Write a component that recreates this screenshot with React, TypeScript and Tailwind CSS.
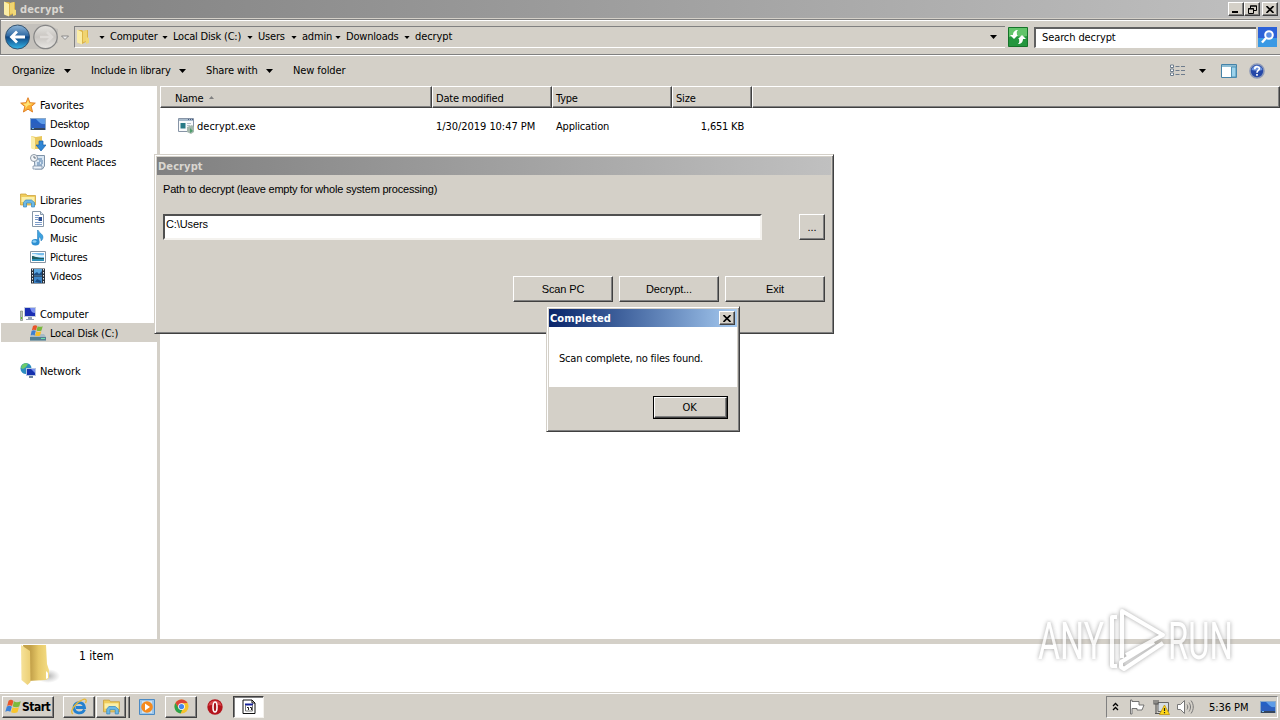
import { Fragment, type ReactNode } from "react";

type IconProps = { className?: string };

const FolderIcon = ({ className = "w-4 h-4" }: IconProps): React.ReactElement => (
  <svg viewBox="0 0 16 16" className={className}>
    <path d="M2 1h5l1 1 5-1v11l-6 3-4-1z" fill="#dcb548" />
    <path d="M8 2l4-1v11l-4 1z" fill="#f0d470" />
    <path d="M2 .5l5 2.500v12.500l-5-2z" fill="#fbeda6" />
    <path d="M11 8l3 1v5l-3 1z" fill="#f0d878" />
  </svg>
);

const BigFolderIcon = (): React.ReactElement => (
  <svg viewBox="0 0 40 42" className="w-10 h-[42px]">
    <defs>
      <linearGradient id="fold-front" x1="0" x2="1">
        <stop offset="0" stopColor="#f6e29a" />
        <stop offset="1" stopColor="#eccf74" />
      </linearGradient>
      <linearGradient id="fold-back" x1="0" x2="1">
        <stop offset="0.300" stopColor="#c4a24a" />
        <stop offset="0.600" stopColor="#e6c868" />
        <stop offset="1" stopColor="#f4dd85" />
      </linearGradient>
      <radialGradient id="fold-shade">
        <stop offset="0" stopColor="#808080" stopOpacity="0.6" />
        <stop offset="1" stopColor="#909090" stopOpacity="0" />
      </radialGradient>
    </defs>
    <ellipse cx="28" cy="32" rx="12" ry="7" fill="url(#fold-shade)" />
    <path d="M3 1h23l1 19 2 6v8l-3 2-18 1z" fill="url(#fold-back)" />
    <path d="M1 1l9 6 .5 31-3 3-6-5z" fill="url(#fold-front)" />
    <path d="M26 27l2 2v5l-2 1z" fill="#fff" />
  </svg>
);

const MonitorIcon = ({ className = "w-4 h-4" }: IconProps): React.ReactElement => (
  <svg viewBox="0 0 16 16" className={className}>
    <path d="M0 2h16v12H0z" fill="#8ba9c9" />
    <path d="M1 3h14v9H1z" fill="#2560c4" />
    <path d="M6 3h9v5C11 9 9 6 6 3z" fill="#5d9ce8" />
    <path d="M1 7c4-2 8 2 14 1v4H1z" fill="#2f5fbc" opacity=".7" />
    <path d="M1 12h14v2H1z" fill="#36465c" />
    <path d="M2 12h2v1H2z" fill="#70b8f0" />
  </svg>
);

const StarIcon = (): React.ReactElement => (
  <svg viewBox="0 0 16 16" className="w-4 h-4">
    <path d="M8 .7l2 5 5.300.4-4.100 3.500 1.400 5.400L8 12.200 3.400 15l1.400-5.400L.7 6.100 6 5.700z" fill="#fbb034" stroke="#df7c20" strokeWidth=".9" />
    <path d="M8 3l1.300 3.400 3.600.4-5 1.600L5 12l.7-3L3 6.800l3.500-.4z" fill="#ffe478" />
  </svg>
);

const DownloadsIcon = (): React.ReactElement => (
  <svg viewBox="0 0 16 16" className="w-4 h-4">
    <path d="M1 1l5 1 6-1v13H4l-3-1z" fill="#e9c75c" />
    <path d="M1 1l4 2v12l-4-2z" fill="#fbeeab" />
    <path d="M9 6h4v4h3l-5 6-5-6h3z" fill="#2f86d6" stroke="#1b62a8" strokeWidth=".7" />
  </svg>
);

const RecentIcon = (): React.ReactElement => (
  <svg viewBox="0 0 16 16" className="w-4 h-4">
    <path d="M4 1.500h10.500V12l-2 3H5z" fill="#d9e6f2" stroke="#7f93a8" />
    <path d="M7 5h5M9 7h4M7 9h3M11 9h2M7 11h5" stroke="#4f7ba8" />
    <path d="M3 12h9v3H3z" fill="#eef4fa" stroke="#7f93a8" strokeWidth=".8" />
    <circle cx="4" cy="4" r="3.500" fill="#f4f6f8" stroke="#8c98a5" />
    <path d="M4 2v2h2" fill="none" stroke="#445566" strokeWidth=".8" />
  </svg>
);

const LibraryIcon = ({ className = "w-4 h-4" }: IconProps): React.ReactElement => (
  <svg viewBox="0 0 16 16" className={className}>
    <path d="M.5 2h5.500l1 1.500h8.500V13H.5z" fill="#f0cd5c" stroke="#c99b31" strokeWidth=".7" />
    <path d="M1.500 5h13v5h-13z" fill="#fbefa8" />
    <path d="M3.500 15v-4.500l2-2.500h6l3 2.500V15h-3v-4h-5v4z" fill="#6cb9e6" stroke="#3a87bd" strokeWidth=".7" />
  </svg>
);

const DocumentIcon = (): React.ReactElement => (
  <svg viewBox="0 0 16 16" className="w-4 h-4">
    <path d="M2.500.5h8l3 3v12h-11z" fill="#fff" stroke="#8797a8" />
    <path d="M10.500.5v3h3" fill="#d6e1ec" stroke="#8797a8" />
    <path d="M5 4.500h4M5 6.500h3M5 8.500h3M5 11.500h7M5 13.500h7" stroke="#7d9cc8" />
    <path d="M8.500 6h3.500v4h-3.500z" fill="#2c4f94" />
  </svg>
);

const MusicIcon = (): React.ReactElement => (
  <svg viewBox="0 0 16 16" className="w-4 h-4">
    <path d="M8 0c1 3 5 4 5 7 0 2-1 3-2 4 0-3-1-4-2-4v5H7.500V0z" fill="#3da2e0" stroke="#2277b4" strokeWidth=".5" />
    <ellipse cx="5.500" cy="12.300" rx="4" ry="3.200" fill="#2d8fd2" />
    <ellipse cx="4.500" cy="11.500" rx="2" ry="1.200" fill="#8fd0f4" />
  </svg>
);

const PictureIcon = (): React.ReactElement => (
  <svg viewBox="0 0 16 16" className="w-4 h-4">
    <path d="M.5 2.500h15v11H.5z" fill="#fff" stroke="#8795a3" />
    <path d="M2 4h12v8H2z" fill="#78bdec" />
    <path d="M2 5c4-1 5 2 12 1v2H2z" fill="#e0f3fc" />
    <path d="M2 7c3 0 4 2 12 2v3H2z" fill="#1f5f62" />
    <path d="M2 10h12v2H2z" fill="#2c8fb8" />
  </svg>
);

const VideoIcon = (): React.ReactElement => (
  <svg viewBox="0 0 16 16" className="w-4 h-4">
    <path d="M1 .5h14v15H1z" fill="#28303a" />
    <path d="M4 1h8v6.500H4z" fill="#5ba7e0" />
    <path d="M4 8.500h8V15H4z" fill="#3d86c8" />
    <path d="M4 6l3-2 2 2 3-3v4H4zM5 14l2-3 4 2v2z" fill="#1c4e86" />
    <path d="M2.500 1v15M13.500 1v15" stroke="#e8edf2" strokeDasharray="1.500 1.500" />
  </svg>
);

const ComputerIcon = (): React.ReactElement => (
  <svg viewBox="0 0 16 16" className="w-4 h-4">
    <path d="M.5 5h2v9.500h-2z" fill="#b9c6b9" stroke="#73806f" strokeWidth=".6" />
    <path d="M1 11h1v2H1z" fill="#55c02f" />
    <path d="M4 1h12v10H4z" fill="#c4cede" />
    <path d="M5 2h10v8H5z" fill="#1a2fb4" />
    <path d="M10 2h5v5c-3 0-4-2-5-5z" fill="#7a90f0" />
    <path d="M8 11h4v2h2v1H6v-1h2z" fill="#93a2b8" />
  </svg>
);

const WindowsFlag = ({ className = "w-4 h-4" }: IconProps): React.ReactElement => (
  <svg viewBox="0 0 18 16" className={className}>
    <path d="M4 1.500c2-1.500 3.700-1.200 5.500.2L8 7.500C6 6.300 4.500 6.300 2.400 7.300z" fill="#e8562a" />
    <path d="M10 2c2 1.500 4.500 1.500 7.800 0L16 8c-2.500 1.200-5 1-7.300 0z" fill="#7cba3c" />
    <path d="M2.100 8c2-1 3.700-1 5.600.2L6 14C4 12.800 2.500 12.800.3 14z" fill="#3c82d8" />
    <path d="M8.500 8.800c2 1 4.500 1 7.200 0L14 14.600c-2 1-5 1.200-7.200 0z" fill="#f8c52c" />
  </svg>
);

const DiskIcon = (): React.ReactElement => (
  <svg viewBox="0 0 16 16" className="w-4 h-4">
    <path d="M2 9h12l2 3v3.500H0V12z" fill="#a8bac6" />
    <path d="M0 12h16v3.500H0z" fill="#537f92" />
    <path d="M11 13h4v1h-4z" fill="#6fe0a8" />
    <path d="M3 1c1.500-1 3-1 4.200 0L6 5.500c-1.500-1-3-1-4.200 0z" fill="#e8562a" />
    <path d="M7.700 1.200c1.500.8 3.300.8 5 0l-1.200 4.300c-1.500.8-3.500.8-5 0z" fill="#78b83a" />
    <path d="M1.600 6c1.500-1 3-1 4.200 0l-1.200 4.500c-1.200-1-2.500-1-4 0z" fill="#3c7fd0" />
    <path d="M6.300 6.300c1.500.8 3.300.8 5 0l-1.200 4.200c-1.500.8-3.500.8-5 0z" fill="#f6bd28" />
  </svg>
);

const NetworkIcon = (): React.ReactElement => (
  <svg viewBox="0 0 16 16" className="w-4 h-4">
    <circle cx="6" cy="5.500" r="5.500" fill="#2d8dc0" />
    <path d="M2 2c2-2 5-2 6-1L6 4 3 6 1 5zM6 7l3-1 1 3-3 2z" fill="#6ccb6a" />
    <path d="M6 5h10v8H6z" fill="#b6c5e2" />
    <path d="M7 6h8v6H7z" fill="#1531ae" />
    <path d="M11 6h4v4z" fill="#7690ee" />
    <path d="M9 13h4v2H9z" fill="#6c83a0" />
  </svg>
);

const ExeIcon = (): React.ReactElement => (
  <svg viewBox="0 0 16 16" className="w-4 h-4">
    <path d="M.5.5h15v13H.5z" fill="#f8fafb" stroke="#8794a6" />
    <path d="M1 1h14v2H1z" fill="#a7bacb" />
    <path d="M10 1.500h1M12 1.500h1M14 1.500h1" stroke="#455a80" />
    <path d="M2.500 5h5v5.500h-5z" fill="#287a86" />
    <path d="M9 5.500h4M9 7.500h3" stroke="#b5bec8" />
    <path d="M9 9l5-2 2 2v5l-3 2-4-2z" fill="#a4b8ad" />
    <path d="M12 10l3 3-3 2z" fill="#4e9d6c" />
  </svg>
);

const Caret = ({ className = "w-[7px] h-1" }: IconProps): React.ReactElement => (
  <svg viewBox="0 0 7 4" className={`shrink-0 ${className}`}>
    <path d="M0 0h7L3.500 4z" />
  </svg>
);

const CloseGlyph = (): React.ReactElement => (
  <svg viewBox="0 0 8 7" className="w-2 h-[7px]">
    <path d="M.5 0l7 7M7.500 0l-7 7" stroke="#000" strokeWidth="1.600" />
  </svg>
);

const raised =
  "border border-t-white border-l-white border-r-[#404040] border-b-[#404040] shadow-[inset_-1px_-1px_0_#808080]";

const windowFrame =
  "border border-t-[#d4d0c8] border-l-[#d4d0c8] border-r-[#404040] border-b-[#404040] shadow-[inset_1px_1px_0_#fff,inset_-1px_-1px_0_#808080]";

const CaptionButton = ({ children, className = "" }: { children: ReactNode; className?: string }): React.ReactElement => (
  <button className={`w-4 h-3.5 flex items-center justify-center bg-[#d4d0c8] ${raised} ${className}`}>
    {children}
  </button>
);

const crumbs = [
  { name: "Computer", style: "w-[52px]" },
  { name: "Local Disk (C:)", style: "w-[74px]" },
  { name: "Users", style: "w-[33px]" },
  { name: "admin", style: "w-[33px]" },
  { name: "Downloads", style: "w-[58px]" },
  { name: "decrypt", style: "w-[40px] tracking-[-0.1px]" },
];

const TitleBar = (): React.ReactElement => (
  <div className="h-[18px] flex items-center bg-linear-to-r from-[#808080] to-[#c0c0c0] pl-0.5 pr-0.5">
    <FolderIcon className="w-4 h-4" />
    <span className="ml-0.5 font-bold text-[#d9d6d0] tracking-[0.1px]">decrypt</span>
    <div className="ml-auto flex items-center">
      <CaptionButton>
        <span className="w-1.5 h-0.5 mt-1.5 mr-0.5 bg-black" />
      </CaptionButton>
      <CaptionButton>
        <svg viewBox="0 0 9 9" className="w-[9px] h-[9px]">
          <path d="M2.500 3V1h6v4.500H6M2 1h7" fill="none" stroke="#000" />
          <path d="M.5 3.500h5v5h-5zM0 4h6" fill="none" stroke="#000" />
        </svg>
      </CaptionButton>
      <CaptionButton className="ml-0.5">
        <CloseGlyph />
      </CaptionButton>
    </div>
  </div>
);

const NavButtons = (): React.ReactElement => (
  <svg viewBox="0 0 68 32" className="w-[68px] h-8 shrink-0">
    <defs>
      <linearGradient id="nav-back" x2="0" y2="1">
        <stop offset="0" stopColor="#8fb6d8" />
        <stop offset=".45" stopColor="#2f6aa4" />
        <stop offset=".5" stopColor="#0d4583" />
        <stop offset="1" stopColor="#35b6e8" />
      </linearGradient>
      <linearGradient id="nav-fwd" x2="0" y2="1">
        <stop offset="0" stopColor="#e6e4e0" />
        <stop offset=".5" stopColor="#c8c5c1" />
        <stop offset="1" stopColor="#e9e7e4" />
      </linearGradient>
    </defs>
    <path d="M17 3h28c6 0 6 4 12 5v14c-6 1-6 6-12 6H17z" fill="#c4c1bc" />
    <circle cx="16.500" cy="16" r="12" fill="url(#nav-back)" stroke="#35536f" />
    <path d="M10 16h14M16 10.500L10.500 16l5.500 5.500" stroke="#fff" strokeWidth="2.800" fill="none" />
    <circle cx="44.500" cy="16" r="11.700" fill="url(#nav-fwd)" stroke="#858585" strokeWidth="1.200" />
    <path d="M39 16h12M46 11l5 5-5 5" stroke="#dedbd8" strokeWidth="2.600" fill="none" />
    <path d="M60.500 15h7l-3.500 3.500z" fill="#eee" stroke="#777" strokeWidth=".8" />
  </svg>
);

const AddressBar = (): React.ReactElement => (
  <div className="h-9 mt-px flex items-center border-t border-b border-l border-[#808080] shadow-[inset_0_1px_0_#fff,0_1px_0_#fff] pr-0.5">
    <NavButtons />
    <div className="ml-[5px] w-[931px] shrink-0 h-[22px] flex items-center border-t border-l border-[#808080] border-b border-b-white">
      <FolderIcon className="w-4 h-[18px]" />
      <Caret className="ml-2 w-1.5 h-[3px]" />
      {crumbs.map((crumb, i) => (
        <Fragment key={crumb.name}>
          {i > 0 && <Caret className="w-1.5 h-[3px]" />}
          <span className={`ml-[5px] -mt-px whitespace-nowrap ${crumb.style}`}>{crumb.name}</span>
        </Fragment>
      ))}
      <Caret className="ml-auto mr-2 w-[7px] h-1" />
    </div>
    <svg viewBox="0 0 20 20" className="ml-[3px] w-5 h-5 shrink-0">
      <path d="M.5.5h19v19H.5z" fill="#24963e" stroke="#167329" />
      <path d="M1 1h18v8c-6 2-12-1-18 1z" fill="#62c46a" />
      <path d="M6 12l-4-4h3c0-3 2-5 5-5-2 2-1 3-1 5h1zM14 8l4 4h-3c0 3-2 5-5 5 2-2 1-3 1-5h-1z" fill="#fff" />
    </svg>
    <div className="ml-1.5 w-[222px] shrink-0 h-[21px] flex items-center border-t-2 border-l-2 border-t-[#606060] border-l-[#606060] border-b border-b-white bg-white pl-1.5 tracking-[-0.1px]">
      Search decrypt
    </div>
    <svg viewBox="0 0 19 20" className="ml-0.5 w-[19px] h-5 shrink-0">
      <path d="M0 0h19v20H0z" fill="#2c62d8" />
      <path d="M0 11h19v9H0z" fill="#3fb0ea" opacity=".7" />
      <circle cx="11" cy="8" r="3.800" fill="#5a8ee4" stroke="#fff" strokeWidth="2" />
      <path d="M8 11l-4 4.500" stroke="#fff" strokeWidth="2.400" />
    </svg>
  </div>
);

const Toolbar = (): React.ReactElement => (
  <div className="h-[31px] flex items-center pl-3 whitespace-nowrap">
    <span className="w-[52px]">Organize</span>
    <Caret />
    <span className="ml-5 w-[88px]">Include in library</span>
    <Caret />
    <span className="ml-5 w-[60px] tracking-[-0.1px]">Share with</span>
    <Caret />
    <span className="ml-5 tracking-[-0.1px]">New folder</span>
    <div className="ml-auto flex items-center pr-[15px]">
      <svg viewBox="0 0 16 13" className="w-4 h-[13px]">
        <path d="M.5 1h3v2.500h-3zM.5 5h3v2.500h-3zM.5 9h3v2.500h-3z" fill="#fff" stroke="#6c7c8c" />
        <path d="M5.500 2.500h4M11 2.500h4M5.500 6.500h4M11 6.500h4M5.500 10.500h4M11 10.500h4" stroke="#6e7c8c" />
      </svg>
      <Caret className="ml-[13px] w-[7px] h-1" />
      <svg viewBox="0 0 16 14" className="ml-[15px] w-4 h-3.5">
        <path d="M.5.5h15v13H.5z" fill="#fff" stroke="#4482a8" />
        <path d="M1 1h14v2H1z" fill="#8dbdd4" />
        <path d="M10.500 3h4.500v10h-4.500z" fill="#9dd3ec" stroke="#5193b5" />
      </svg>
      <svg viewBox="0 0 16 16" className="ml-3 w-4 h-4">
        <circle cx="8" cy="8" r="7" fill="#2447a8" stroke="#8b98b8" strokeWidth="1.600" />
        <path d="M2.500 7c1-6 10-6 11 0-3 1-7 1-11 0z" fill="#6f94dc" />
        <path d="M5.700 6.200c.2-3.500 5-3 4.600-.3C10 7.500 8 7.500 8 9.800M8 11v1.800" fill="none" stroke="#fff" strokeWidth="1.700" />
      </svg>
    </div>
  </div>
);

const groups = [
  {
    name: "Favorites",
    icon: <StarIcon />,
    items: [
      { name: "Desktop", icon: <MonitorIcon /> },
      { name: "Downloads", icon: <DownloadsIcon /> },
      { name: "Recent Places", icon: <RecentIcon /> },
    ],
  },
  {
    name: "Libraries",
    icon: <LibraryIcon />,
    items: [
      { name: "Documents", icon: <DocumentIcon /> },
      { name: "Music", icon: <MusicIcon /> },
      { name: "Pictures", icon: <PictureIcon /> },
      { name: "Videos", icon: <VideoIcon /> },
    ],
  },
  {
    name: "Computer",
    icon: <ComputerIcon />,
    items: [{ name: "Local Disk (C:)", icon: <DiskIcon />, selected: true }],
  },
  { name: "Network", icon: <NetworkIcon />, items: [] },
];

const Sidebar = (): React.ReactElement => (
  <div className="w-[157px] shrink-0 pt-[9px] pl-px flex flex-col gap-[19px]">
    {groups.map((group) => (
      <div key={group.name}>
        <div className="h-[19px] flex items-center gap-1 pl-[19px]">
          {group.icon}
          <span className="pt-0.5 tracking-[-0.1px]">{group.name}</span>
        </div>
        {group.items.map((item) => (
          <div
            key={item.name}
            className={`h-[19px] flex items-center gap-1 pl-[29px] ${"selected" in item ? "bg-[#d4d0c8]" : ""}`}
          >
            {item.icon}
            <span className="pt-0.5">{item.name}</span>
          </div>
        ))}
      </div>
    ))}
  </div>
);

const columns = [
  { name: "Name", style: "w-[272px] pl-3.5" },
  { name: "Date modified", style: "w-[120px] pl-[3px]" },
  { name: "Type", style: "w-[120px] pl-[3px]" },
  { name: "Size", style: "w-20 pl-[3px]" },
  { name: "", style: "flex-1" },
];

const FileList = (): React.ReactElement => (
  <div className="flex-1 flex flex-col">
    <div className="h-[22px] flex bg-[#d4d0c8]">
      {columns.map((column) => (
        <div key={column.name} className={`flex items-center pt-0.5 ${raised} ${column.style}`}>
          {column.name}
          {column.name === "Name" && (
            <svg viewBox="0 0 5 3" className="ml-1.5 mb-0.5 w-[5px] h-[3px]">
              <path d="M0 3h5L2.500 0z" fill="#808080" />
            </svg>
          )}
        </div>
      ))}
    </div>
    <div className="mt-[9px] h-[18px] flex items-center pl-[18px]">
      <ExeIcon />
      <span className="ml-[3px] w-[239px] tracking-normal">decrypt.exe</span>
      <span className="w-[120px] whitespace-nowrap tracking-[-0.05px]">1/30/2019 10:47 PM</span>
      <span className="w-[120px]">Application</span>
      <span className="w-[68px] text-right">1,651 KB</span>
    </div>
  </div>
);

const Watermark = (): React.ReactElement => (
  <div className="absolute left-[1038px] top-[607px] w-[200px] h-[66px] flex items-center text-white tracking-normal opacity-80 drop-shadow-[0_0_2px_#8c8c8c]">
    <span className="mt-1 w-[66px] font-['Roboto'] font-normal text-[52px] leading-none origin-left scale-x-[0.65] whitespace-nowrap">ANY</span>
    <svg viewBox="0 0 60 66" className="w-[60px] h-[66px] shrink-0 overflow-visible" fill="none" stroke="#fff" strokeWidth="4" strokeLinejoin="round">
      <path d="M18 51V4l41 24-37 20" />
      <path d="M59 36L20 62l-3-2v-5l33-20" />
      <path d="M13 10H8v49h5" />
    </svg>
    <span className="mt-1 ml-1 w-[70px] font-['Roboto'] font-normal text-[52px] leading-none origin-left scale-x-[0.63] whitespace-nowrap">RUN</span>
  </div>
);

const PushButton = ({ children, className = "" }: { children: ReactNode; className?: string }): React.ReactElement => (
  <button className={`flex items-center justify-center bg-[#d4d0c8] ${raised} ${className}`}>{children}</button>
);

const DecryptWindow = (): React.ReactElement => (
  <div className={`absolute left-[154px] top-[154px] w-[680px] h-[180px] bg-[#d4d0c8] p-0.5 font-['Liberation_Sans'] tracking-[-0.1px] ${windowFrame}`}>
    <div className="h-[18px] flex items-center bg-linear-to-r from-[#808080] to-[#c0c0c0] pl-px font-bold text-[#d9d6d0] font-['DejaVu_Sans_Condensed'] tracking-[0.1px]">
      Decrypt
    </div>
    <div className="pl-[6px] pr-1.5">
      <div className="mt-1.5 h-4 flex items-center tracking-[-0.2px]">Path to decrypt (leave empty for whole system processing)</div>
      <div className="mt-[17px] flex justify-between">
        <div className="w-[599px] h-[26px] bg-white border-2 border-t-[#505050] border-l-[#505050] border-r-[#f4f2ee] border-b-[#f4f2ee] pl-px leading-4">
          C:\Users
        </div>
        <PushButton className="w-[26px] h-[26px]">...</PushButton>
      </div>
      <div className="mt-9 flex justify-end gap-1.5">
        <PushButton className="w-[100px] h-[26px]">Scan PC</PushButton>
        <PushButton className="w-[100px] h-[26px]">Decrypt...</PushButton>
        <PushButton className="w-[100px] h-[26px]">Exit</PushButton>
      </div>
    </div>
  </div>
);

const CompletedDialog = (): React.ReactElement => (
  <div className={`absolute left-[546px] top-[306px] w-[194px] h-[126px] bg-[#d4d0c8] p-0.5 ${windowFrame}`}>
    <div className="h-[18px] flex items-center justify-between bg-linear-to-r from-[#0a246a] to-[#a6caf0] pl-px pr-0.5 font-bold text-white tracking-[0.1px]">
      Completed
      <CaptionButton>
        <CloseGlyph />
      </CaptionButton>
    </div>
    <div className="h-[60px] bg-white flex items-center pt-0.5 pl-2.5">Scan complete, no files found.</div>
    <div className="mt-[9px] mr-[9px] ml-auto w-[75px] h-[23px] border border-black flex">
      <PushButton className="flex-1 pr-0.5">OK</PushButton>
    </div>
  </div>
);

const DetailsPane = (): React.ReactElement => (
  <div className="h-[48px] bg-white flex pl-5">
    <BigFolderIcon />
    <span className="ml-[19px] mt-1.5 text-[12px] tracking-normal">1 item</span>
  </div>
);

const Taskbar = (): React.ReactElement => (
  <div className="h-7 flex items-center border-t border-[#d4d0c8] shadow-[inset_0_1px_0_#fff] pl-0.5 pr-0.5">
    <button className={`w-[52px] h-[22px] flex items-center gap-px pl-0.5 font-bold text-[12px] tracking-[-0.5px] ${raised}`}>
      <WindowsFlag className="w-4 h-[15px] shrink-0" />
      <span className="pt-0.5">Start</span>
    </button>
    <div className={`ml-[9px] w-8 h-[22px] flex items-center justify-center ${raised}`}>
      <svg viewBox="0 0 18 18" className="w-[18px] h-[18px]">
        <path d="M14.500 11.500C12.500 16.500 4 16 4 9.500 4 3.500 13.500 2.500 14.500 9.500H6" fill="none" stroke="#2380d0" strokeWidth="2.800" />
        <path d="M3 16C-1 14 5 5 12 2c4-2 5 0 3.500 3" fill="none" stroke="#e7b834" strokeWidth="1.300" />
      </svg>
    </div>
    <div className={`ml-px w-[30px] h-[22px] flex items-center justify-center ${raised}`}>
      <LibraryIcon className="w-[17px] h-[17px]" />
    </div>
    <div className="w-1 h-[22px] border-r border-t border-t-white border-r-[#404040] shadow-[inset_-1px_0_0_#808080]" />
    <svg viewBox="0 0 16 16" className="ml-[9px] w-4 h-4">
      <path d="M.5.5h15v15H.5z" fill="#9dc5e8" stroke="#4b8ac4" />
      <path d="M3 2h10v12H3z" fill="#cce2f4" />
      <circle cx="8" cy="8" r="5.800" fill="#f58a1e" />
      <path d="M6 4.500v7l5-3.500z" fill="#fff" />
    </svg>
    <div className={`ml-[10px] w-8 h-[22px] flex items-center justify-center ${raised}`}>
      <svg viewBox="0 0 16 16" className="w-[15px] h-[15px]">
        <circle cx="8" cy="8" r="7.500" fill="#f5c32c" />
        <path d="M1.500 4.300A7.500 7.500 0 0 1 14.500 4.300L8 4.500 5 10z" fill="#dc4437" />
        <path d="M1.500 4.300L5 10l4 1-2 4.500A7.500 7.500 0 0 1 1.500 4.300z" fill="#2ba24c" />
        <circle cx="8" cy="8" r="3.600" fill="#fff" />
        <circle cx="8" cy="8" r="2.800" fill="#4587ee" />
      </svg>
    </div>
    <svg viewBox="0 0 16 16" className="ml-[10px] w-4 h-4">
      <circle cx="8" cy="8" r="7.700" fill="#b4141c" />
      <path d="M1.500 7C2 0 14 0 14.500 7c-4-2-9-2-13 0z" fill="#d84a4e" />
      <ellipse cx="8" cy="8" rx="2" ry="5" fill="#a8141a" stroke="#fff" strokeWidth="1.600" />
    </svg>
    <div className="ml-[10px] w-[31px] h-[22px] flex items-center justify-center bg-white border border-t-[#404040] border-l-[#404040] border-r-[#f4f2ee] border-b-[#f4f2ee] shadow-[inset_1px_1px_0_#808080]">
      <svg viewBox="0 0 14 16" className="w-3.5 h-4">
        <path d="M1 1h9l3 3v10.500H1z" fill="#fff" stroke="#111" />
        <path d="M10 1v3h3" fill="none" stroke="#111" />
        <path d="M3 4.500h8v2H3z" fill="#17229a" />
        <path d="M3.500 6v6h7V6" fill="none" stroke="#777" />
        <path d="M5 8.500h1.500V11M8 8.500h1.500V11" fill="none" stroke="#222" />
      </svg>
    </div>
    <div className="ml-auto w-[172px] h-[22px] flex items-center border-t border-l border-[#808080] border-r border-b border-r-white border-b-white pl-[5px]">
      <svg viewBox="0 0 7 9" className="w-[7px] h-[9px] shrink-0">
        <path d="M1 4l2.500-2.500L6 4M1 8l2.500-2.500L6 8" fill="none" stroke="#000" strokeWidth="1.300" />
      </svg>
      <svg viewBox="0 0 16 16" className="ml-2.5 w-4 h-4 shrink-0">
        <path d="M1.500 1v14h1.500V9.500h5V11h5l2-5h-5V2.500H3V1z" fill="#fff" stroke="#666" strokeWidth=".9" />
      </svg>
      <svg viewBox="0 0 17 16" className="ml-2 w-[17px] h-4 shrink-0">
        <path d="M5 3.500h10.500v9H5z" fill="#d6dde2" stroke="#666" />
        <path d="M1 1v4h4V1M3 1v14M2 14.500h5" fill="none" stroke="#555" strokeWidth="1.100" />
        <path d="M11.500 6l5 9.500h-10z" fill="#ffd817" stroke="#b88a00" strokeWidth=".7" />
        <path d="M11.500 9v3M11.500 13v1.200" stroke="#222" strokeWidth="1.200" />
      </svg>
      <svg viewBox="0 0 17 16" className="ml-[7px] w-[17px] h-4 shrink-0" fill="none" stroke="#777">
        <path d="M.5 5.500h3l4-4v13l-4-4h-3z" fill="#fff" />
        <path d="M10 5.500c1 1.500 1 3.500 0 5M12 3.500c2 3 2 6 0 9M14 1.500c3 4 3 9 0 13" />
      </svg>
      <span className="ml-[15px] pt-0.5 whitespace-nowrap tracking-[-0.05px]">5:36 PM</span>
      <MonitorIcon className="ml-auto mr-px w-4 h-4 shrink-0" />
    </div>
  </div>
);

const App = (): React.ReactElement => {
  return (
    <div className="relative w-[1280px] h-[720px] overflow-hidden flex flex-col bg-[#d4d0c8] text-black text-[11px] leading-[13px] tracking-[-0.2px] font-['DejaVu_Sans_Condensed','DejaVu_Sans',sans-serif]">
      <TitleBar />
      <AddressBar />
      <Toolbar />
      <div className="h-[553px] flex bg-white">
        <Sidebar />
        <div className="w-[3px] bg-[#d4d0c8]" />
        <FileList />
      </div>
      <div className="h-[5px]" />
      <DetailsPane />
      <Taskbar />
      <DecryptWindow />
      <CompletedDialog />
      <Watermark />
    </div>
  );
};

export default App;
